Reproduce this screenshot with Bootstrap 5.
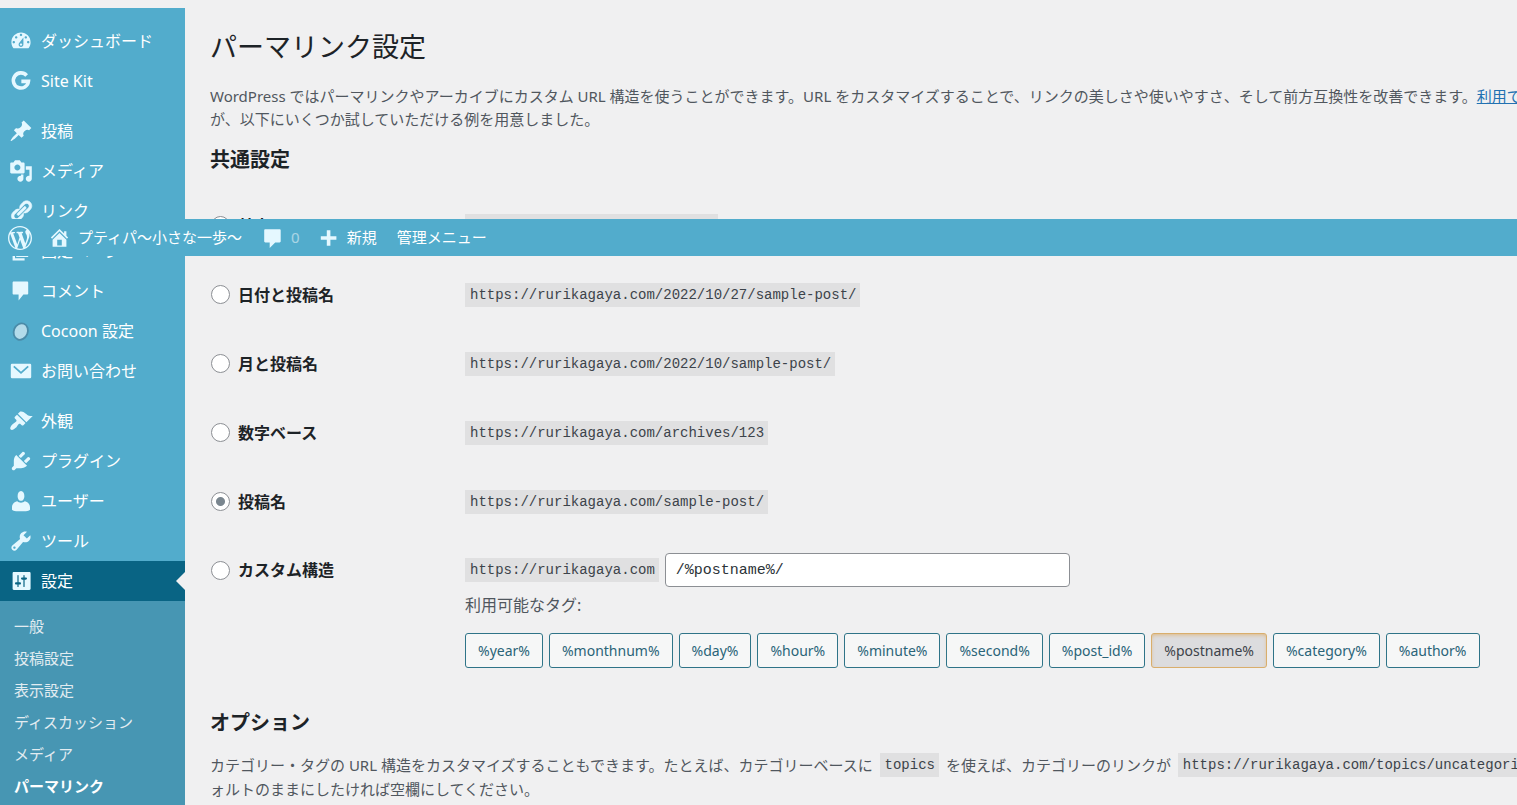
<!DOCTYPE html>
<html lang="ja">
<head>
<meta charset="utf-8">
<meta name="viewport" content="width=device-width, initial-scale=1">
<title>パーマリンク設定</title>
<link rel="stylesheet" href="https://cdn.jsdelivr.net/npm/bootstrap@5.3.0/dist/css/bootstrap.min.css">
<style>
body{background:#f0f0f1;color:#50575e;font:15px/23px "Noto Sans","Noto Sans CJK JP",sans-serif;overflow-x:hidden}
svg{fill:currentColor;flex:none}
/* side menu */
.admin-menu{width:185px;background:#52accc;padding-top:13px;font-size:16px}
.admin-menu ul{list-style:none;margin:0;padding:0}
.admin-menu a{color:#fff;text-decoration:none;white-space:nowrap}
.menu-link{height:40px;padding-left:9px;gap:8px}
.menu-link svg,.top-bar svg{color:#e5f8ff}
.menu-gap{margin-top:10px}
.menu-current{background:#096484;position:relative}
.menu-current::after{content:"";position:absolute;right:0;top:11px;border:9px solid transparent;border-left:0;border-right-color:#f0f0f1}
.admin-menu .sub-menu{background:#4796b3;padding:9px 0;font-size:15px}
.sub-menu a{display:block;height:32px;line-height:32px;padding-left:14px;color:#e2ecf1}
.sub-menu .sub-current{color:#fff;font-weight:700}
/* toolbar lies over the scrolled page */
.top-bar{position:absolute;top:219px;left:0;right:0;height:37px;background:#52accc;padding-left:8px;z-index:10;white-space:nowrap}
.top-bar a{color:#fff;text-decoration:none;gap:7px}
/* content */
.page-main{padding:21px 0 0 25px;min-width:0;overflow:hidden}
h1{font-size:27px;line-height:36px;font-weight:400;color:#1d2327;margin:0 0 20px}
h2{font-size:20px;line-height:28px;font-weight:700;color:#1d2327;margin:0}
.page-main p{white-space:nowrap;margin:0}
.page-main .intro{margin-bottom:15px}
.page-main .options{margin-top:16px;line-height:24px}
.options code{margin:0 3px}
.page-main p a{color:#2271b1}
.choices{margin-top:17px}
.choice{min-height:69px;padding:22px 0}
.choice-name{width:255px;flex:none;color:#1d2327;font-size:16px;line-height:24px;font-weight:700;gap:8px;padding-left:1px}
.choice-name .form-check-input{width:19px;height:19px;margin:0;border:1px solid #8c8f94;background-color:#fff;flex:none}
.choice-name .form-check-input:checked{background:#fff radial-gradient(circle,#7a868f 4px,#fff 5px)}
code{font:14px/24px "Liberation Mono",monospace;color:#3c434a;background:#e0e0e1;padding:0 4px 0 5px;border-radius:0;display:inline-block;vertical-align:top}
.choice-custom{padding-top:17px}
.choice-custom .choice-name{margin-top:5px}
.structure{width:405px;height:34px;border:1px solid #8c8f94;border-radius:4px;padding:0 10px;font:15px "Liberation Mono",monospace;color:#2c3338}
.tag-label{font-size:16px;line-height:24px;margin:6px 0 16px}
.tags{gap:6px}
.tag-list .btn{font-size:14px;line-height:23px;padding:5px 12px;border:1px solid #2f7488;border-radius:3px;color:#2a6478;background:#f6f7f7}
.tag-list .btn.active{background:#dcdcde;border-color:#d9ae6c;color:#3c434a;box-shadow:inset 0 2px 5px -2px #e0a85a}
.second{margin-top:19px}
</style>
<script src="https://cdn.jsdelivr.net/npm/bootstrap@5.3.0/dist/js/bootstrap.bundle.min.js"></script>
</head>
<body>
<header class="top-bar d-flex align-items-center">
  <a href="#" aria-label="WordPress" class="d-flex"><svg width="24" height="24" viewBox="0 0 20 20"><path d="M20 10c0-5.51-4.49-10-10-10C4.48 0 0 4.49 0 10c0 5.52 4.48 10 10 10 5.51 0 10-4.48 10-10zM7.78 15.37L4.37 6.22c.55-.02 1.17-.08 1.17-.08.5-.06.44-1.13-.06-1.11 0 0-1.45.11-2.37.11-.18 0-.37 0-.58-.01C4.12 2.69 6.87 1.11 10 1.11c2.33 0 4.45.87 6.05 2.34-.68-.11-1.65.39-1.65 1.58 0 .74.45 1.36.9 2.1.35.61.55 1.36.55 2.46 0 1.49-1.4 5-1.4 5l-3.03-8.37c.54-.02.82-.17.82-.17.5-.05.44-1.25-.06-1.22 0 0-1.44.12-2.38.12-.87 0-2.33-.12-2.33-.12-.5-.03-.56 1.2-.06 1.22l.92.08 1.26 3.41zM17.41 10c.24-.64.74-1.87.43-4.25.7 1.29 1.05 2.71 1.05 4.25 0 3.29-1.73 6.24-4.4 7.78.97-2.59 1.94-5.2 2.92-7.78zM6.1 18.09C3.12 16.65 1.11 13.53 1.11 10c0-1.3.23-2.48.72-3.59C3.25 10.3 4.67 14.2 6.1 18.09zm4.03-6.63l2.58 6.98c-.86.29-1.76.45-2.71.45-.79 0-1.57-.11-2.29-.33.81-2.38 1.62-4.74 2.42-7.1z"/></svg></a>
  <a href="#" class="d-flex align-items-center ps-3"><svg width="23" height="23" viewBox="0 0 20 20"><path d="M16 8.5l1.53 1.53-1.06 1.06L10 4.6l-6.47 6.49-1.06-1.06L10 2.5l4 4v-2h2v4zm-6-2.46l6 5.99V18H4v-5.97zM12 17v-5H8v5h4z" fill-rule="evenodd"/></svg>プティパ～小さな一歩～</a>
  <a href="#" class="d-flex align-items-center ps-3 ms-1"><svg width="22" height="22" viewBox="0 0 20 20"><path d="M3 2h13c.6 0 1 .4 1 1v10c0 .6-.4 1-1 1h-4l-5 5v-5H3c-.6 0-1-.4-1-1V3c0-.6.4-1 1-1z"/></svg><span class="opacity-50">0</span></a>
  <a href="#" class="d-flex align-items-center ps-3"><svg width="24" height="24" viewBox="0 0 20 20"><path d="M17 8.500v3h-5v5H9v-5H4v-3h5v-5h3v5z"/></svg>新規</a>
  <a href="#" class="ps-3 ms-1">管理メニュー</a>
</header>
<div class="d-flex min-vh-100 pt-2">
<nav class="admin-menu flex-shrink-0">
  <ul>
    <li><a href="#" class="menu-link d-flex align-items-center"><svg width="24" height="24" viewBox="0 0 20 20"><path d="M3.760 16h12.480c1.100-1.370 1.760-3.110 1.760-5 0-4.420-3.580-8-8-8s-8 3.580-8 8c0 1.890.660 3.630 1.760 5zM10 4c.55 0 1 .45 1 1s-.45 1-1 1-1-.45-1-1 .45-1 1-1zM6 6c.55 0 1 .45 1 1s-.45 1-1 1-1-.45-1-1 .45-1 1-1zm8 0c.55 0 1 .45 1 1s-.45 1-1 1-1-.45-1-1 .45-1 1-1zm-5.370 5.550L12 7v6c0 1.100-.9 2-2 2s-2-.9-2-2c0-.57.24-1.080.63-1.450zM4 10c.55 0 1 .45 1 1s-.45 1-1 1-1-.45-1-1 .45-1 1-1zm12 0c.55 0 1 .45 1 1s-.45 1-1 1-1-.45-1-1 .45-1 1-1zm-5 3c0-.55-.45-1-1-1s-1 .45-1 1 .45 1 1 1 1-.45 1-1z" fill-rule="evenodd"/></svg>ダッシュボード</a></li>
    <li><a href="#" class="menu-link d-flex align-items-center"><svg width="24" height="24" viewBox="0 0 20 20"><path d="M14.700 5.400A6.300 6.300 0 1 0 16.200 10.300H10.300" fill="none" stroke="currentColor" stroke-width="3"/></svg>Site Kit</a></li>
    <li class="menu-gap"><a href="#" class="menu-link d-flex align-items-center"><svg width="24" height="24" viewBox="0 0 20 20"><path d="M10.440 3.020l1.820-1.820 6.360 6.350-1.830 1.820c-1.050-.68-2.480-.57-3.410.36l-.75.75c-.92.93-1.040 2.350-.35 3.410l-1.830 1.820-2.410-2.410-2.800 2.790c-.42.42-3.380 2.710-3.800 2.290s1.860-3.390 2.280-3.810l2.790-2.790L4.100 9.360l1.830-1.820c1.050.69 2.480.57 3.400-.36l.75-.75c.93-.92 1.050-2.350.36-3.410z"/></svg>投稿</a></li>
    <li><a href="#" class="menu-link d-flex align-items-center"><svg width="24" height="24" viewBox="0 0 20 20"><path d="M13 11V4c0-.55-.45-1-1-1h-1.670L9 1H5L3.670 3H2c-.55 0-1 .45-1 1v7c0 .55.45 1 1 1h10c.55 0 1-.45 1-1zM7 4.500c1.380 0 2.500 1.120 2.500 2.500S8.380 9.500 7 9.500 4.500 8.380 4.500 7 5.620 4.500 7 4.500zM14 6h5v10.500c0 1.380-1.120 2.500-2.500 2.500S14 17.880 14 16.500s1.120-2.500 2.500-2.500c.17 0 .34.02.5.05V9h-3V6zm-4 8.050V13h2v3.500c0 1.380-1.120 2.500-2.500 2.500S7 17.880 7 16.500 8.120 14 9.500 14c.17 0 .34.02.5.05z" fill-rule="evenodd"/></svg>メディア</a></li>
    <li><a href="#" class="menu-link d-flex align-items-center"><svg width="24" height="24" viewBox="0 0 20 20"><path stroke="currentColor" stroke-width=".5" d="M17.740 2.760c1.680 1.690 1.680 4.410 0 6.100l-1.530 1.520c-1.120 1.120-2.700 1.470-4.140 1.090l2.620-2.610.76-.77.76-.76c.84-.84.84-2.200 0-3.040-.84-.85-2.200-.85-3.040 0l-.77.76-3.380 3.380c-.37-1.440-.02-3.020 1.100-4.140l1.520-1.530c1.690-1.680 4.420-1.680 6.100 0zM8.590 13.430l5.340-5.340c.42-.42.42-1.100 0-1.520-.44-.43-1.130-.39-1.530 0l-5.330 5.340c-.42.42-.42 1.100 0 1.520.44.43 1.130.39 1.520 0zm-.76 2.290l4.140-4.150c.38 1.440.03 3.020-1.090 4.140l-1.520 1.530c-1.690 1.680-4.410 1.680-6.100 0-1.680-1.680-1.680-4.420 0-6.100l1.530-1.520c1.120-1.120 2.700-1.470 4.140-1.100l-4.140 4.150c-.85.84-.85 2.200 0 3.050.84.84 2.200.84 3.040 0z"/></svg>リンク</a></li>
    <li><a href="#" class="menu-link d-flex align-items-center"><svg width="24" height="24" viewBox="0 0 20 20"><path d="M6 15V2h10v13H6zm-1 1h8v2H3V5h2v11z"/></svg>固定ページ</a></li>
    <li><a href="#" class="menu-link d-flex align-items-center"><svg width="24" height="24" viewBox="0 0 20 20"><path d="M4 2h11c.6 0 1 .4 1 1v9c0 .6-.4 1-1 1h-3l-4 5v-5H4c-.6 0-1-.4-1-1V3c0-.6.4-1 1-1z"/></svg>コメント</a></li>
    <li><a href="#" class="menu-link d-flex align-items-center"><svg width="24" height="24" viewBox="0 0 20 20"><ellipse cx="10" cy="10.500" rx="5.800" ry="7" transform="rotate(22 10 10)" fill="#b3dbea" stroke="#4a8ba8" stroke-width="1.500"/></svg>Cocoon 設定</a></li>
    <li><a href="#" class="menu-link d-flex align-items-center"><svg width="24" height="24" viewBox="0 0 20 20"><rect x="1.500" y="4" width="17" height="12" rx="1"/><path d="M4 6.200l6 5.300 6-5.300" fill="none" stroke="#52accc" stroke-width="1.500"/></svg>お問い合わせ</a></li>
    <li class="menu-gap"><a href="#" class="menu-link d-flex align-items-center"><svg width="24" height="24" viewBox="0 0 20 20"><path d="M14.480 11.060L7.410 3.990l1.500-1.500c.5-.56 2.300-.47 3.510.32 1.210.8 1.430 1.280 2.910 2.100 1.180.64 2.450 1.260 4.450.85zm-.71.71L6.700 4.700 4.930 6.470c-.39.39-.39 1.020 0 1.410l1.060 1.060c.39.39.39 1.030 0 1.420-.6.6-1.430 1.110-2.210 1.690-.35.26-.7.53-1.010.84C1.430 14.230.4 16.080 1.400 17.070c.99 1 2.840-.03 4.180-1.360.31-.31.58-.66.85-1.020.57-.78 1.080-1.610 1.690-2.210.39-.39 1.020-.39 1.410 0l1.060 1.060c.39.39 1.020.39 1.410 0z"/></svg>外観</a></li>
    <li><a href="#" class="menu-link d-flex align-items-center"><svg width="24" height="24" viewBox="0 0 20 20"><path d="M13.110 4.360L9.870 7.600 8 5.730l3.240-3.240c.35-.34 1.050-.2 1.560.32.52.51.66 1.210.31 1.550zm-8 1.770l.91-1.120 9.010 9.010-1.190.84c-.71.71-2.630 1.160-3.820 1.160H6.140L4.900 17.260c-.59.59-1.540.59-2.120 0-.59-.58-.59-1.530 0-2.120l1.240-1.240v-3.880c0-1.130.4-3.190 1.090-3.890zm7.260 3.970l3.240-3.240c.34-.35 1.040-.21 1.550.31.52.51.66 1.210.31 1.550l-3.240 3.250z"/></svg>プラグイン</a></li>
    <li><a href="#" class="menu-link d-flex align-items-center"><svg width="24" height="24" viewBox="0 0 20 20"><path d="M10 9.800c-2 0-2.800-2-2.800-4C7.200 3.500 8.200 1.700 10 1.700s2.800 1.800 2.800 4.100c0 2-.8 4-2.800 4zM7 10.300c.8.8 1.800 1.200 3 1.200s2.200-.4 3-1.200c2.600.3 4.500 2.500 4.500 5V17c0 1-3.500 1.600-7.500 1.600S2.500 18 2.500 17v-1.700c0-2.500 1.900-4.700 4.500-5z"/></svg>ユーザー</a></li>
    <li><a href="#" class="menu-link d-flex align-items-center"><svg width="24" height="24" viewBox="0 0 20 20"><path d="M16.680 9.770c-1.340 1.340-3.300 1.670-4.950.99l-5.410 6.520c-.99.99-2.590.99-3.580 0s-.99-2.590 0-3.570l6.520-5.420c-.68-1.650-.35-3.610.99-4.950 1.280-1.280 3.120-1.620 4.720-1.060l-2.890 2.890 2.820 2.820 2.860-2.870c.53 1.580.18 3.390-1.080 4.650zM3.810 16.210c.4.39 1.040.39 1.430 0 .4-.4.4-1.040 0-1.430-.39-.4-1.030-.4-1.430 0-.39.39-.39 1.030 0 1.430z" fill-rule="evenodd"/></svg>ツール</a></li>
    <li><a href="#" class="menu-link menu-current d-flex align-items-center" aria-current="true"><svg width="24" height="24" viewBox="0 0 20 20"><path d="M18 16.500v-13c0-.55-.45-1-1-1H4c-.55 0-1 .45-1 1v13c0 .55.45 1 1 1h13c.55 0 1-.45 1-1zM8 11h1c.55 0 1 .45 1 1s-.45 1-1 1H8v1.500c0 .28-.22.5-.5.5s-.5-.22-.5-.5V13H6c-.55 0-1-.45-1-1s.45-1 1-1h1V5.500c0-.28.22-.5.5-.5s.5.22.5.5V11zm6-2h-1v5.500c0 .28-.22.5-.5.5s-.5-.22-.5-.5V9h-1c-.55 0-1-.45-1-1s.45-1 1-1h1V5.500c0-.28.22-.5.5-.5s.5.22.5.5V7h1c.55 0 1 .45 1 1s-.45 1-1 1z" fill-rule="evenodd"/></svg>設定</a>
      <ul class="sub-menu">
        <li><a href="#">一般</a></li>
        <li><a href="#">投稿設定</a></li>
        <li><a href="#">表示設定</a></li>
        <li><a href="#">ディスカッション</a></li>
        <li><a href="#">メディア</a></li>
        <li><a href="#" class="sub-current" aria-current="page">パーマリンク</a></li>
      </ul>
    </li>
  </ul>
</nav>
<main class="page-main flex-grow-1">
  <h1>パーマリンク設定</h1>
  <p class="intro">WordPress ではパーマリンクやアーカイブにカスタム URL 構造を使うことができます。URL をカスタマイズすることで、リンクの美しさや使いやすさ、そして前方互換性を改善できます。<a href="#">利用できるタグ</a><br>が、以下にいくつか試していただける例を用意しました。</p>
  <h2>共通設定</h2>
  <form class="choices">
    <div class="choice d-flex align-items-center"><label class="choice-name d-flex align-items-center"><input class="form-check-input" type="radio" name="structure">基本</label><code>https://rurikagaya.com/?p=123</code></div>
    <div class="choice d-flex align-items-center"><label class="choice-name d-flex align-items-center"><input class="form-check-input" type="radio" name="structure">日付と投稿名</label><code>https://rurikagaya.com/2022/10/27/sample-post/</code></div>
    <div class="choice d-flex align-items-center"><label class="choice-name d-flex align-items-center"><input class="form-check-input" type="radio" name="structure">月と投稿名</label><code>https://rurikagaya.com/2022/10/sample-post/</code></div>
    <div class="choice d-flex align-items-center"><label class="choice-name d-flex align-items-center"><input class="form-check-input" type="radio" name="structure">数字ベース</label><code>https://rurikagaya.com/archives/123</code></div>
    <div class="choice d-flex align-items-center"><label class="choice-name d-flex align-items-center"><input class="form-check-input" type="radio" name="structure" checked>投稿名</label><code>https://rurikagaya.com/sample-post/</code></div>
    <div class="choice choice-custom d-flex align-items-start"><label class="choice-name d-flex align-items-center"><input class="form-check-input" type="radio" name="structure">カスタム構造</label>
      <div>
        <div class="d-flex align-items-center tags"><code>https://rurikagaya.com</code><input class="structure" type="text" value="/%postname%/" aria-label="カスタム構造"></div>
        <div class="tag-label">利用可能なタグ:</div>
        <div class="d-flex tags tag-list">
          <button type="button" class="btn">%year%</button>
          <button type="button" class="btn">%monthnum%</button>
          <button type="button" class="btn">%day%</button>
          <button type="button" class="btn">%hour%</button>
          <button type="button" class="btn">%minute%</button>
          <button type="button" class="btn">%second%</button>
          <button type="button" class="btn">%post_id%</button>
          <button type="button" class="btn active" aria-pressed="true">%postname%</button>
          <button type="button" class="btn">%category%</button>
          <button type="button" class="btn">%author%</button>
        </div>
      </div>
    </div>
  </form>
  <h2 class="second">オプション</h2>
  <p class="options">カテゴリー・タグの URL 構造をカスタマイズすることもできます。たとえば、カテゴリーベースに <code>topics</code> を使えば、カテゴリーのリンクが <code>https://rurikagaya.com/topics/uncategorized/</code><br>ォルトのままにしたければ空欄にしてください。</p>
</main>
</div>
</body>
</html>
